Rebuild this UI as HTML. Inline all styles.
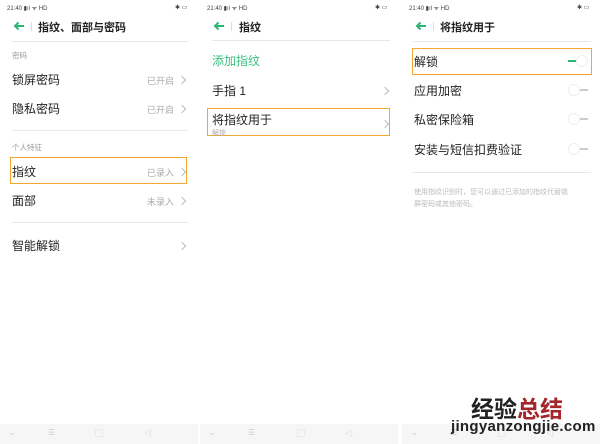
<!DOCTYPE html>
<html><head><meta charset="utf-8"><style>
*{margin:0;padding:0;box-sizing:border-box}
body{width:600px;height:444px;background:#fff;position:relative;overflow:hidden;font-family:"Liberation Sans","Noto Sans CJK SC",sans-serif;color:#222}
.a{position:absolute;white-space:nowrap}
.st{font-size:6px;color:#444;top:4px}
.t{font-size:11px;font-weight:bold;top:19px}
.ar{position:absolute;top:21px}
.sep{position:absolute;width:1px;height:9px;background:#ddd;top:22px}
.hr{position:absolute;height:1px;background:#e8e8e8}
.lb{font-size:7.5px;color:#999}
.it{font-size:12px;color:#222}
.v{font-size:9px;color:#aaa}
.ch{position:absolute;width:6px;height:6px;border-top:1px solid #bbb;border-right:1px solid #bbb;transform:rotate(45deg)}
.box{position:absolute;border:1.5px solid #f0a830}
.nav{position:absolute;top:424px;height:20px;background:#f6f6f6}
.ni{position:absolute;top:428px;font-size:8px;color:#ccc}
.tg{position:absolute;width:12px;height:12px;border-radius:50%;border:1px solid #eee;background:#fff}
.tl{position:absolute;width:8px;height:2px;background:#ccc}
</style></head><body>
<div class="a st" style="left:7px">21:40 ▮ıl ᯤ HD</div><div class="a st" style="left:175px">✱ ▭</div>
<div class="a st" style="left:207px">21:40 ▮ıl ᯤ HD</div><div class="a st" style="left:375px">✱ ▭</div>
<div class="a st" style="left:409px">21:40 ▮ıl ᯤ HD</div><div class="a st" style="left:577px">✱ ▭</div>
<!-- panel 1 -->
<svg class="ar" style="left:13px" width="12" height="10" viewBox="0 0 12 10"><path d="M11 5H2M5.5 1.5L2 5l3.5 3.5" stroke="#2bb673" stroke-width="2" fill="none"/></svg>
<div class="sep" style="left:31px"></div>
<div class="a t" style="left:38px">指纹、面部与密码</div>
<div class="hr" style="left:12px;width:176px;top:41px"></div>
<div class="a lb" style="left:12px;top:50px">密码</div>
<div class="a it" style="left:12px;top:71px">锁屏密码</div><div class="a v" style="left:147px;top:74px">已开启</div><div class="ch" style="left:179px;top:77px"></div>
<div class="a it" style="left:12px;top:100px">隐私密码</div><div class="a v" style="left:147px;top:103px">已开启</div><div class="ch" style="left:179px;top:106px"></div>
<div class="hr" style="left:12px;width:176px;top:130px"></div>
<div class="a lb" style="left:12px;top:142px">个人特征</div>
<div class="box" style="left:10px;top:157px;width:177px;height:27px"></div>
<div class="a it" style="left:12px;top:163px">指纹</div><div class="a v" style="left:147px;top:166px">已录入</div><div class="ch" style="left:179px;top:169px"></div>
<div class="a it" style="left:12px;top:192px">面部</div><div class="a v" style="left:147px;top:195px">未录入</div><div class="ch" style="left:179px;top:198px"></div>
<div class="hr" style="left:12px;width:176px;top:222px"></div>
<div class="a it" style="left:12px;top:237px">智能解锁</div><div class="ch" style="left:179px;top:243px"></div>
<!-- panel 2 -->
<svg class="ar" style="left:213px" width="12" height="10" viewBox="0 0 12 10"><path d="M11 5H2M5.5 1.5L2 5l3.5 3.5" stroke="#2bb673" stroke-width="2" fill="none"/></svg>
<div class="sep" style="left:231px"></div>
<div class="a t" style="left:239px">指纹</div>
<div class="hr" style="left:212px;width:178px;top:40px"></div>
<div class="a it" style="left:212px;top:52px;color:#3cbf80">添加指纹</div>
<div class="a it" style="left:212px;top:82px">手指 1</div><div class="ch" style="left:382px;top:88px"></div>
<div class="box" style="left:207px;top:108px;width:183px;height:28px"></div>
<div class="a it" style="left:212px;top:111px">将指纹用于</div>
<div class="a" style="left:212px;top:128px;font-size:7px;color:#aaa">解锁</div><div class="ch" style="left:382px;top:121px"></div>
<!-- panel 3 -->
<svg class="ar" style="left:415px" width="12" height="10" viewBox="0 0 12 10"><path d="M11 5H2M5.5 1.5L2 5l3.5 3.5" stroke="#2bb673" stroke-width="2" fill="none"/></svg>
<div class="sep" style="left:433px"></div>
<div class="a t" style="left:440px">将指纹用于</div>
<div class="hr" style="left:413px;width:178px;top:41px"></div>
<div class="box" style="left:412px;top:48px;width:180px;height:27px"></div>
<div class="a it" style="left:414px;top:53px">解锁</div>
<div class="tg" style="left:576px;top:55px"></div><div class="tl" style="left:568px;top:60px;background:#2bb673"></div>
<div class="a it" style="left:414px;top:82px">应用加密</div>
<div class="tg" style="left:568px;top:84px"></div><div class="tl" style="left:580px;top:89px"></div>
<div class="a it" style="left:414px;top:111px">私密保险箱</div>
<div class="tg" style="left:568px;top:113px"></div><div class="tl" style="left:580px;top:118px"></div>
<div class="a it" style="left:414px;top:141px">安装与短信扣费验证</div>
<div class="tg" style="left:568px;top:143px"></div><div class="tl" style="left:580px;top:148px"></div>
<div class="hr" style="left:413px;width:178px;top:172px"></div>
<div class="a" style="left:414px;top:187px;font-size:7px;color:#bbb;line-height:12px">使用指纹识别时，您可以通过已添加的指纹代替锁<br>屏密码或其他密码。</div>
<!-- nav -->
<div class="nav" style="left:0;width:198px"></div><div class="nav" style="left:200px;width:198px"></div><div class="nav" style="left:402px;width:198px"></div>
<div class="ni" style="left:9px">⌄</div><div class="ni" style="left:48px">☰</div><div class="ni" style="left:95px">▢</div><div class="ni" style="left:144px">◁</div>
<div class="ni" style="left:209px">⌄</div><div class="ni" style="left:248px">☰</div><div class="ni" style="left:297px">▢</div><div class="ni" style="left:345px">◁</div>
<div class="ni" style="left:411px">⌄</div><div class="ni" style="left:450px">☰</div><div class="ni" style="left:498px">▢</div><div class="ni" style="left:546px">◁</div>
<!-- watermark -->
<div class="a" style="left:471px;top:390px;font-size:23px;font-weight:bold;font-family:'Noto Sans CJK SC',sans-serif;color:#222">经验<span style="color:#a3262a">总结</span></div>
<div class="a" style="left:451px;top:418px;font-size:15px;font-weight:bold;color:#222;font-family:'Liberation Sans',sans-serif;letter-spacing:0.3px">jingyanzongjie.com</div>
</body></html>
